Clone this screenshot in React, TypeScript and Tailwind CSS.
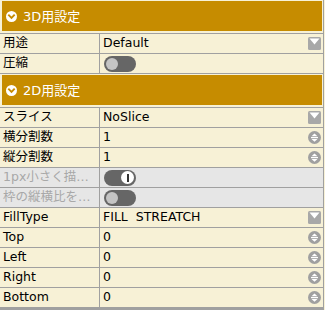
import React from "react";

const GOLD = "#c68c00";

function HeaderIcon() {
  return (
    <svg width="11" height="11" viewBox="0 0 11 11">
      <circle cx="5.5" cy="5.5" r="5.5" fill="#ffffff" />
      <path d="M3 4.3 L5.5 6.8 L8 4.3" fill="none" stroke={GOLD} strokeWidth="1.9" strokeLinecap="square" />
    </svg>
  );
}

function DropIcon() {
  return (
    <svg width="13" height="13" viewBox="0 0 13 13">
      <rect x="0" y="0" width="13" height="13" rx="1.5" fill="#a8a8a8" />
      <polygon points="1.5,1.5 11.5,1.5 6.5,7.5" fill="#ffffff" />
    </svg>
  );
}

function SpinIcon() {
  return (
    <svg width="13" height="13" viewBox="0 0 13 13">
      <circle cx="6.5" cy="6.5" r="6.5" fill="#a0a0a0" />
      <polygon points="3.5,5.2 9.5,5.2 6.5,2.4" fill="#ffffff" />
      <rect x="3" y="6" width="7" height="1.2" fill="#ffffff" />
      <polygon points="3.5,8 9.5,8 6.5,10.8" fill="#ffffff" />
    </svg>
  );
}

function Toggle({ on }: { on?: boolean }) {
  return (
    <div className="w-[32px] h-[16px] rounded-full bg-[#666666] flex items-center px-[2px]">
      {on ? (
        <div className="ml-auto w-[13px] h-[13px] rounded-full bg-white flex items-center justify-center">
          <div className="w-[2px] h-[8px] bg-[#333333]" />
        </div>
      ) : (
        <div className="w-[12px] h-[12px] rounded-full bg-[#c4c4c4]" />
      )}
    </div>
  );
}

function Header({ title }: { title: string }) {
  return (
    <div className="mt-px mb-[2px] ml-[2px] mr-px h-[30px] bg-[#c68c00] flex items-center pl-[4px] gap-[6px] text-white text-[13px]">
      <HeaderIcon />
      <span className="leading-none">{title}</span>
    </div>
  );
}

type RowProps = {
  label: string;
  value?: string;
  icon?: "drop" | "spin";
  toggle?: "on" | "off";
  disabled?: boolean;
};

function Row({ label, value, icon, toggle, disabled }: RowProps) {
  return (
    <div
      className={
        "flex h-[20px] border-b border-[#a0a0a0] " +
        (disabled ? "bg-[#e6e6e6] text-[#a8a8a8]" : "text-black")
      }
    >
      <div className="w-[100px] border-r border-[#a0a0a0] pl-[3px] flex items-center overflow-hidden whitespace-nowrap">
        {label}
      </div>
      <div className={"flex-1 flex items-center pr-[2px] " + (toggle ? "pl-[4px]" : "pl-[3px]")}>
        {toggle ? <Toggle on={toggle === "on"} /> : <span className="whitespace-pre">{value}</span>}
        {icon && (
          <div className="ml-auto flex items-center">
            {icon === "drop" ? <DropIcon /> : <SpinIcon />}
          </div>
        )}
      </div>
    </div>
  );
}

export default function App() {
  return (
    <div className="w-[325px] h-[310px] bg-[#f7f1d6] overflow-hidden font-['DejaVu_Sans','Noto_Sans_CJK_JP',sans-serif] text-[12.5px]">
      <div className="w-[324px] h-[310px] border-r border-[#a0a0a0] flex flex-col">
        <Header title="3D用設定" />
        <div className="border-t border-[#a0a0a0]">
          <Row label="用途" value="Default" icon="drop" />
          <Row label="圧縮" toggle="off" />
        </div>
        <Header title="2D用設定" />
        <div className="border-t border-[#a0a0a0]">
          <Row label="スライス" value="NoSlice" icon="drop" />
          <Row label="横分割数" value="1" icon="spin" />
          <Row label="縦分割数" value="1" icon="spin" />
          <Row label="1px小さく描…" toggle="on" disabled />
          <Row label="枠の縦横比を…" toggle="off" disabled />
          <Row label="FillType" value="FILL  STREATCH" icon="drop" />
          <Row label="Top" value="0" icon="spin" />
          <Row label="Left" value="0" icon="spin" />
          <Row label="Right" value="0" icon="spin" />
          <Row label="Bottom" value="0" icon="spin" />
        </div>
        <div className="flex-1 bg-[#a0a0a0]" />
      </div>
    </div>
  );
}
